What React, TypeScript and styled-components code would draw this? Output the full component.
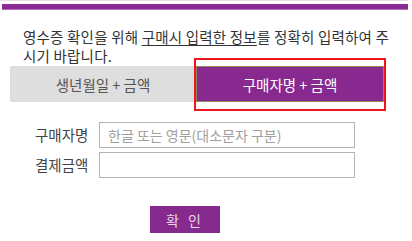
import React from 'react'
import styled, { createGlobalStyle } from 'styled-components'

const GlobalStyle = createGlobalStyle`
    body {
        margin: 0;
        background: #ffffff;
        font-family: "Noto Sans CJK KR", "Noto Sans", sans-serif;
    }
`

const Page = styled.div`
    width: 412px;
    height: 241px;
    overflow: hidden;
    background: #fff;
`
const TopLine = styled.div`
    width: 408px;
    height: 1px;
    background: #e2e2e2;
`
const TopBar = styled.div`
    margin: 3px 0 0 2px;
    width: 406px;
    height: 5px;
    background: #8a2c93;
    border-bottom: 1px solid #b46bbb;
`
const Notice = styled.p`
    margin: 17px 0 0 23px;
    width: 368px;
    font-size: 14.5px;
    line-height: 19px;
    color: #333;
    letter-spacing: 0.2px;
`
const Underline = styled.span`
    text-decoration: underline;
    text-underline-offset: 2px;
`
const Tabs = styled.div`
    display: flex;
    margin: 1px 0 0 10px;
    width: 374px;
`
const Tab = styled.div<{ $active?: boolean }>`
    position: relative;
    flex: 1;
    display: flex;
    align-items: center;
    justify-content: center;
    height: 36px;
    font-size: 14.5px;
    box-sizing: border-box;
    color: ${p => (p.$active ? '#ffffff' : '#555555')};
    background: ${p => (p.$active ? '#87298f' : '#dedede')};
    border: ${p => (p.$active ? '1px solid #8f8a55' : 'none')};

    &::after {
        content: '';
        display: ${p => (p.$active ? 'block' : 'none')};
        position: absolute;
        top: -9px;
        bottom: -10px;
        left: -3px;
        right: -3px;
        border: 2px solid #f0141e;
    }
`
const Form = styled.div`
    display: grid;
    grid-template-columns: 64px 256px;
    row-gap: 4px;
    align-items: center;
    margin: 20px 0 0 35px;
`
const Label = styled.label`
    font-size: 14.5px;
    color: #444;
    align-self: start;
    padding-top: 2px;
`
const Input = styled.input`
    height: 26px;
    box-sizing: border-box;
    border: 1px solid #b4b4b4;
    padding: 0 8px;
    font-family: inherit;
    font-size: 14px;
    color: #333;
    outline: none;
    &::placeholder {
        color: #a0a0a0;
    }
`
const Actions = styled.div`
    display: flex;
    margin: 28px 0 0 150px;
`
const Confirm = styled.button`
    width: 70px;
    height: 27px;
    border: none;
    background: #862a8e;
    color: #e6d6e8;
    font-family: inherit;
    font-size: 14px;
    letter-spacing: 3px;
    cursor: pointer;
`

export default function App() {
    return (
        <Page>
            <GlobalStyle />
            <TopLine />
            <TopBar />
            <Notice>
                영수증 확인을 위해 <Underline>구매시 입력한 정보</Underline>를 정확히 입력하여 주시기 바랍니다.
            </Notice>
            <Tabs>
                <Tab>생년월일 + 금액</Tab>
                <Tab $active>구매자명 + 금액</Tab>
            </Tabs>
            <Form>
                <Label>구매자명</Label>
                <Input placeholder="한글 또는 영문(대소문자 구분)" />
                <Label>결제금액</Label>
                <Input />
            </Form>
            <Actions>
                <Confirm>확 인</Confirm>
            </Actions>
        </Page>
    )
}
